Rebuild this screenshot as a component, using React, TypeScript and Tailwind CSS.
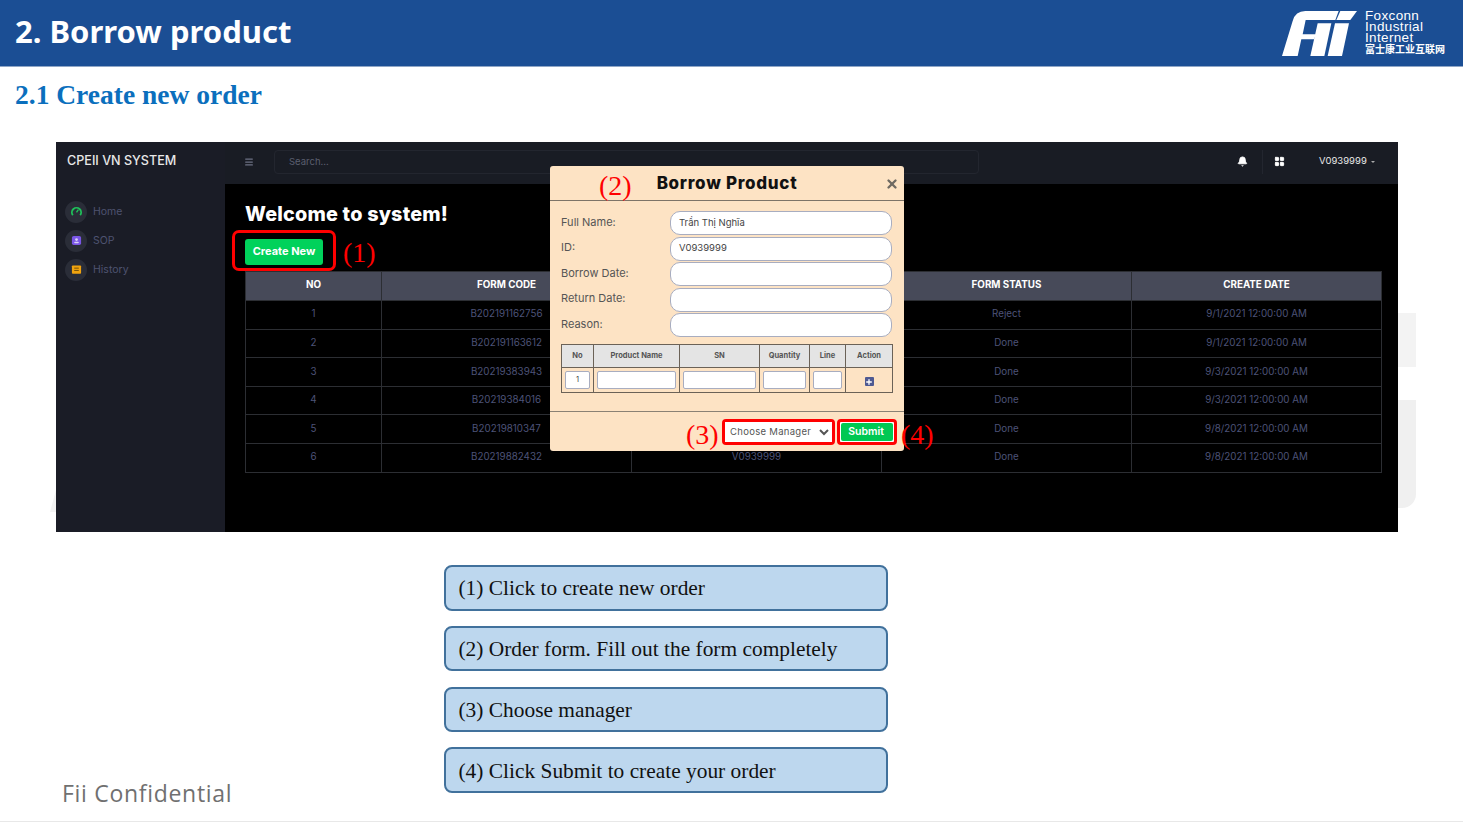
import { Bell, LayoutGrid, Menu, Plus, X } from 'lucide-react';

const orders = [
  { no: 1, code: 'B202191162756', status: 'Reject', date: '9/1/2021 12:00:00 AM' },
  { no: 2, code: 'B202191163612', status: 'Done', date: '9/1/2021 12:00:00 AM' },
  { no: 3, code: 'B20219383943', status: 'Done', date: '9/3/2021 12:00:00 AM' },
  { no: 4, code: 'B20219384016', status: 'Done', date: '9/3/2021 12:00:00 AM' },
  { no: 5, code: 'B20219810347', status: 'Done', date: '9/8/2021 12:00:00 AM' },
  { no: 6, code: 'B20219882432', status: 'Done', date: '9/8/2021 12:00:00 AM' },
];

const formFields = [
  { label: 'Full Name:', value: 'Trần Thị Nghĩa' },
  { label: 'ID:', value: 'V0939999' },
  { label: 'Borrow Date:', value: '' },
  { label: 'Return Date:', value: '' },
  { label: 'Reason:', value: '' },
];

const notes = [
  '(1) Click to create new order',
  '(2) Order form. Fill out the form completely',
  '(3) Choose manager',
  '(4) Click Submit to create your order',
];

function FiiLogo() {
  return (
    <svg viewBox="0 0 255 165" className="h-[55px] w-[85px]" fill="white">
      <path d="M15 150 L62 150 L73 100 L112 100 L116 85 L77 85 L86 42 L175 42 L185 15 L85 15 Q55 15 47 45 Z" />
      <path d="M100 150 L142 150 L163 52 L122 52 Z" />
      <path d="M152 150 L195 150 L216 52 L174 52 Z" />
      <path d="M178 42 L220 42 L240 15 L190 15 Z" />
    </svg>
  );
}

function HomeIcon() {
  return (
    <svg viewBox="0 0 12 12" className="h-[11px] w-[11px]" fill="none" stroke="#1fc15a" strokeWidth="2">
      <path d="M2 10 A5 5 0 1 1 10 10" />
      <path d="M6 7 L8 4" strokeWidth="1.5" />
    </svg>
  );
}

function SopIcon() {
  return (
    <svg viewBox="0 0 12 12" className="h-[11px] w-[11px]">
      <rect x="1" y="1" width="10" height="10" rx="2" fill="#7a56e6" />
      <circle cx="6" cy="5" r="1.5" fill="#d9d2f7" />
      <rect x="3.5" y="7.3" width="5" height="1.7" rx="0.8" fill="#d9d2f7" />
    </svg>
  );
}

function HistoryIcon() {
  return (
    <svg viewBox="0 0 12 12" className="h-[11px] w-[11px]">
      <rect x="1" y="1.5" width="10" height="9" rx="1" fill="#f0a30e" />
      <rect x="3.5" y="4" width="5" height="1" fill="#6b4a08" />
      <rect x="3.5" y="6.5" width="5" height="1" fill="#6b4a08" />
    </svg>
  );
}

function NavItem({ label, icon }: { label: string; icon: React.ReactNode }) {
  return (
    <div className="flex h-[29px] items-center gap-[6px] pl-[9px]">
      <span className="flex h-[22px] w-[22px] items-center justify-center rounded-full bg-[#2a2d38]">{icon}</span>
      <span className="text-[10.5px] text-[#4e5370]">{label}</span>
    </div>
  );
}

function BorrowDialog() {
  return (
    <div className="absolute left-[494px] top-[24px] flex h-[285px] w-[354px] flex-col rounded-[3px] bg-[#fde3c4] text-[#444]">
      <div className="relative flex h-[35px] shrink-0 items-center justify-center border-b border-[#7d7468] pt-[1px] text-[17px] font-extrabold tracking-[0.7px] text-[#111]">
        Borrow Product
        <X size={14} strokeWidth={4} className="absolute right-[5px] top-[11px] text-[#6f6a62]" />
      </div>
      <div className="flex flex-col gap-[1.5px] pl-[11px] pr-[12px] pt-[10px]">
        {formFields.map((field) => (
          <div key={field.label} className="flex h-[24px] items-center">
            <span className="w-[109px] pb-[2px] text-[11px] text-[#555]">{field.label}</span>
            <div className="flex h-[24px] flex-1 items-center rounded-[10px] border border-[#a8adc0] bg-white pl-[8px] text-[9.5px] text-[#444]">
              {field.value}
            </div>
          </div>
        ))}
      </div>
      <table className="ml-[11px] mt-[7px] w-[332px] table-fixed border-collapse border border-[#6b6257] text-center">
        <thead>
          <tr className="h-[23px] bg-[#e4e4e4] text-[7.5px] font-bold text-[#555]">
            <th className="w-[32px] border border-[#6b6257]">No</th>
            <th className="w-[86px] border border-[#6b6257]">Product Name</th>
            <th className="w-[80px] border border-[#6b6257]">SN</th>
            <th className="w-[50px] border border-[#6b6257]">Quantity</th>
            <th className="w-[36px] border border-[#6b6257]">Line</th>
            <th className="border border-[#6b6257]">Action</th>
          </tr>
        </thead>
        <tbody>
          <tr className="h-[25px]">
            <td className="border border-[#6b6257] px-[3px]">
              <div className="flex h-[18px] items-center justify-center rounded-[2px] border border-[#a8adc0] bg-white text-[7.5px]">1</div>
            </td>
            <td className="border border-[#6b6257] px-[3px]">
              <div className="h-[18px] rounded-[2px] border border-[#a8adc0] bg-white" />
            </td>
            <td className="border border-[#6b6257] px-[3px]">
              <div className="h-[18px] rounded-[2px] border border-[#a8adc0] bg-white" />
            </td>
            <td className="border border-[#6b6257] px-[3px]">
              <div className="h-[18px] rounded-[2px] border border-[#a8adc0] bg-white" />
            </td>
            <td className="border border-[#6b6257] px-[3px]">
              <div className="h-[18px] rounded-[2px] border border-[#a8adc0] bg-white" />
            </td>
            <td className="border border-[#6b6257]">
              <span className="inline-flex h-[9px] w-[9px] items-center justify-center rounded-[1px] bg-[#4f5a92] align-middle">
                <Plus size={8} strokeWidth={4} className="text-white" />
              </span>
            </td>
          </tr>
        </tbody>
      </table>
      <div className="mt-[18px] flex flex-1 items-start justify-end gap-[2px] border-t border-[#8a8174] pr-[7px] pt-[7px]">
        <div className="flex h-[26px] w-[113px] items-center rounded-[4px] border-[3px] border-[#ff0000] bg-white">
          <select defaultValue="" className="h-full w-full bg-white pb-[1px] pl-[1px] text-[9.5px] tracking-[0.3px] text-[#555] outline-none">
            <option value="">Choose Manager</option>
          </select>
        </div>
        <div className="h-[26px] w-[60px] rounded-[4px] border-[3px] border-[#ff0000] bg-white p-[1px]">
          <div className="flex h-full items-center justify-center rounded-[2px] bg-[#00c853] pr-[2px] text-[10.5px] font-semibold text-white">Submit</div>
        </div>
      </div>
    </div>
  );
}

function Dashboard() {
  return (
    <div className="relative ml-[56px] mt-[30px] flex h-[390px] w-[1342px] shrink-0 bg-black font-['Inter',sans-serif]">
      <aside className="w-[169px] shrink-0 bg-[#1a1c26]">
        <div className="flex h-[42px] items-center pl-[11px] pb-[3px] text-[12.6px] font-medium text-[#e8e8e8]">CPEII VN SYSTEM</div>
        <div className="mt-[13px] flex flex-col">
          <NavItem label="Home" icon={<HomeIcon />} />
          <NavItem label="SOP" icon={<SopIcon />} />
          <NavItem label="History" icon={<HistoryIcon />} />
        </div>
      </aside>
      <div className="flex min-w-0 flex-1 flex-col">
        <header className="flex h-[42px] shrink-0 items-center bg-[#191c24] pb-[3px] pl-[19px]">
          <Menu size={10} strokeWidth={3} className="text-[#6c7083]" />
          <div className="ml-[20px] mt-[1px] flex h-[24px] w-[705px] items-center rounded-[4px] border border-[#23262f] pl-[14px] pt-[1px] text-[9.5px] text-[#5b5f6f]">Search...</div>
          <Bell size={11} fill="white" className="ml-[258px] text-white" />
          <div className="ml-[14px] h-[24px] w-px bg-[#23262f]" />
          <LayoutGrid size={11} fill="white" className="ml-[11px] text-white" />
          <span className="ml-[34px] text-[9.5px] text-[#e8e8e8]">V0939999</span>
          <span className="ml-[4px] mt-[1px] h-0 w-0 border-x-[2.5px] border-t-[2.5px] border-x-transparent border-t-[#aaa]" />
        </header>
        <main className="px-[20px] pt-[17px]">
          <h1 className="text-[19.8px] font-extrabold leading-[26px] tracking-[0.2px] text-white">Welcome to system!</h1>
          <button className="mt-[12px] flex h-[26px] w-[78px] items-center justify-center rounded-[3px] bg-[#00d25b] pb-[1px] text-[11px] font-bold text-white">Create New</button>
          <table className="mt-[6px] w-[1137px] table-fixed border-collapse text-center text-[9.8px] text-[#4d5378]">
            <thead>
              <tr className="h-[29px] bg-[#474a59] font-extrabold text-white">
                <th className="w-[136px] border border-[#2c2e33] pb-[1px]">NO</th>
                <th className="w-[250px] border border-[#2c2e33] pb-[1px]">FORM CODE</th>
                <th className="w-[250px] border border-[#2c2e33] pb-[1px]">USER ID</th>
                <th className="w-[250px] border border-[#2c2e33] pb-[1px]">FORM STATUS</th>
                <th className="border border-[#2c2e33] pb-[1px]">CREATE DATE</th>
              </tr>
            </thead>
            <tbody>
              {orders.map((order) => (
                <tr key={order.no} className="h-[28.6px]">
                  <td className="border border-[#2c2e33]">{order.no}</td>
                  <td className="border border-[#2c2e33]">{order.code}</td>
                  <td className="border border-[#2c2e33]">V0939999</td>
                  <td className="border border-[#2c2e33]">{order.status}</td>
                  <td className="border border-[#2c2e33]">{order.date}</td>
                </tr>
              ))}
            </tbody>
          </table>
        </main>
      </div>

      {/* Red callouts drawn over the screenshot */}
      <div className="absolute left-[176px] top-[88px] h-[41px] w-[104px] rounded-[7px] border-[3px] border-[#ff0000]" />
      <span className="absolute left-[287px] top-[94px] font-['Liberation_Serif',serif] text-[28px] leading-[34px] text-[#ff0000]">(1)</span>
      <BorrowDialog />
      <span className="absolute left-[543px] top-[27px] font-['Liberation_Serif',serif] text-[28px] leading-[34px] text-[#ff0000]">(2)</span>
      <span className="absolute left-[630px] top-[276px] font-['Liberation_Serif',serif] text-[28px] leading-[34px] text-[#ff0000]">(3)</span>
      <span className="absolute left-[845px] top-[276px] font-['Liberation_Serif',serif] text-[28px] leading-[34px] text-[#ff0000]">(4)</span>
    </div>
  );
}

export default function App() {
  return (
    <div className="relative flex h-[822px] w-[1463px] flex-col overflow-hidden border-b border-[#e8e8e8] bg-white">
      <header className="flex h-[67px] shrink-0 items-center justify-between border-b border-[#8fa6c6] bg-[#1b4e94] pl-[15px] pr-[18px]">
        <h1 className="mb-[4px] font-['Noto_Sans',sans-serif] text-[31px] font-bold text-white">2. Borrow product</h1>
        <div className="flex items-center gap-[3px]">
          <FiiLogo />
          <div className="mb-[3px] font-['Liberation_Sans',sans-serif] text-[13.5px] leading-[11px] tracking-[0.35px] text-white">
            <div>Foxconn</div>
            <div>Industrial</div>
            <div>Internet</div>
            <div className="font-['Noto_Sans_CJK_SC',sans-serif] text-[10px] font-bold tracking-normal">富士康工业互联网</div>
          </div>
        </div>
      </header>
      <h2 className="ml-[15px] mt-[10px] font-['Liberation_Serif',serif] text-[27.5px] font-bold leading-[35px] text-[#0b6fbd]">2.1 Create new order</h2>

      {/* Faint slide watermark showing past the screenshot */}
      <div className="absolute left-[1398px] top-[313px] h-[54px] w-[18px] bg-[#f3f3f3]" />
      <div className="absolute left-[1398px] top-[400px] h-[108px] w-[18px] rounded-br-[14px] bg-[#f0f0f0]" />
      <div className="absolute left-[50px] top-[490px] h-[22px] w-[6px] bg-[#f3f3f3] [clip-path:polygon(100%_0,100%_100%,0_100%)]" />

      <Dashboard />

      <div className="mt-[33px] flex flex-1">
        <div className="flex w-[444px] items-end pb-[13px] pl-[62px]">
          <span className="font-['Open_Sans',sans-serif] text-[23px] leading-[30px] tracking-[0.7px] text-[#707070]">Fii Confidential</span>
        </div>
        <div className="flex w-[444px] flex-col gap-[15.3px]">
          {notes.map((note) => (
            <div key={note} className="flex h-[45.5px] items-center rounded-[8px] border-2 border-[#41719c] bg-[#bdd7ee] pl-[12.5px] pt-[1px] font-['Liberation_Serif',serif] text-[21.4px] text-[#111]">
              {note}
            </div>
          ))}
        </div>
      </div>
    </div>
  );
}
